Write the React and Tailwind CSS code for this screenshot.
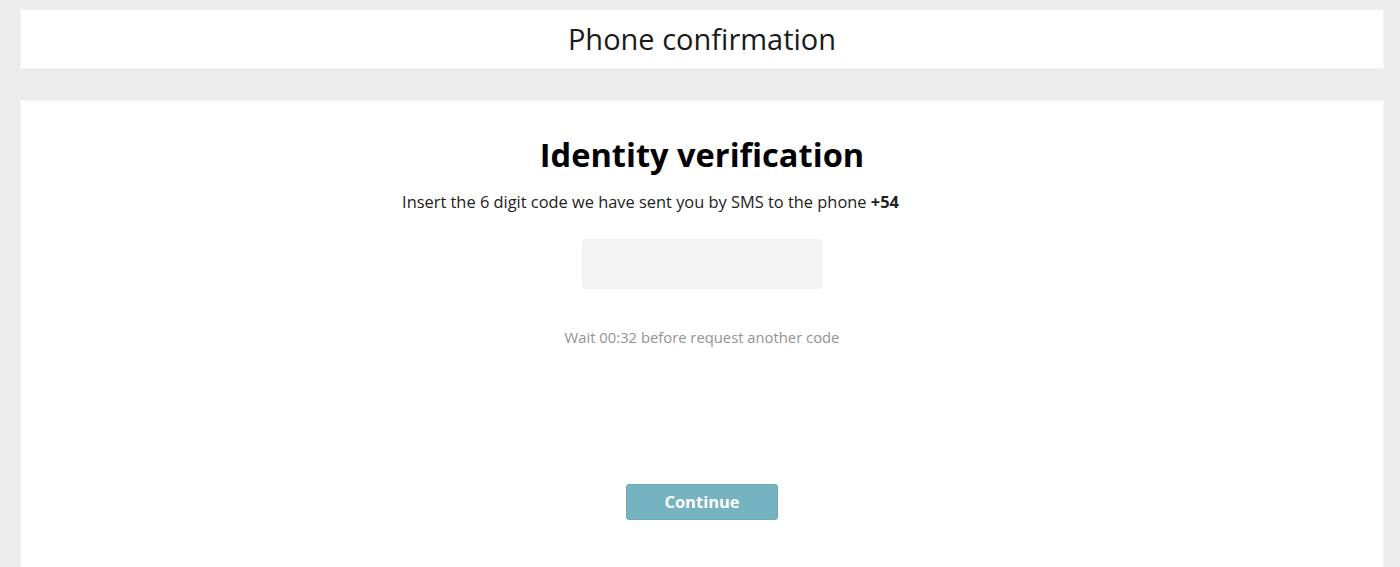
export default function App() {
  return (
    <div className="min-h-[567px] bg-[#ececec] pl-[20px] pr-[16px] pt-[9px] overflow-hidden" style={{ fontFamily: '"Open Sans", sans-serif' }}>
      <div className="h-[60px] bg-white border border-[#f3f3f3] flex items-center justify-center">
        <h1 className="text-[29px] text-[#1a1a1a] leading-none -mt-[2px]">Phone confirmation</h1>
      </div>
      <div className="mt-[31px] h-[480px] bg-white border border-[#f3f3f3] flex flex-col items-center pt-[32px]">
        <h2 className="text-[32.6px] font-bold text-black leading-[44px]">Identity verification</h2>
        <p className="mt-[14px] text-[16.4px] text-[#222] leading-[22px]">
          Insert the 6 digit code we have sent you by SMS to the phone <b>+54</b>
          <span className="inline-block w-[103px]"></span>
        </p>
        <div className="mt-[26px] w-[240px] h-[50px] bg-[#f4f4f4] rounded-[3px] border border-[#f0f0f0]"></div>
        <p className="mt-[37px] text-[14.8px] text-[#939393] leading-[22px]">Wait 00:32 before request another code</p>
        <button className="mt-[136px] w-[152px] h-[36px] bg-[#74b3bf] border border-[#6aabb7] rounded-[3px] text-white font-bold text-[16.5px]">Continue</button>
      </div>
    </div>
  );
}
